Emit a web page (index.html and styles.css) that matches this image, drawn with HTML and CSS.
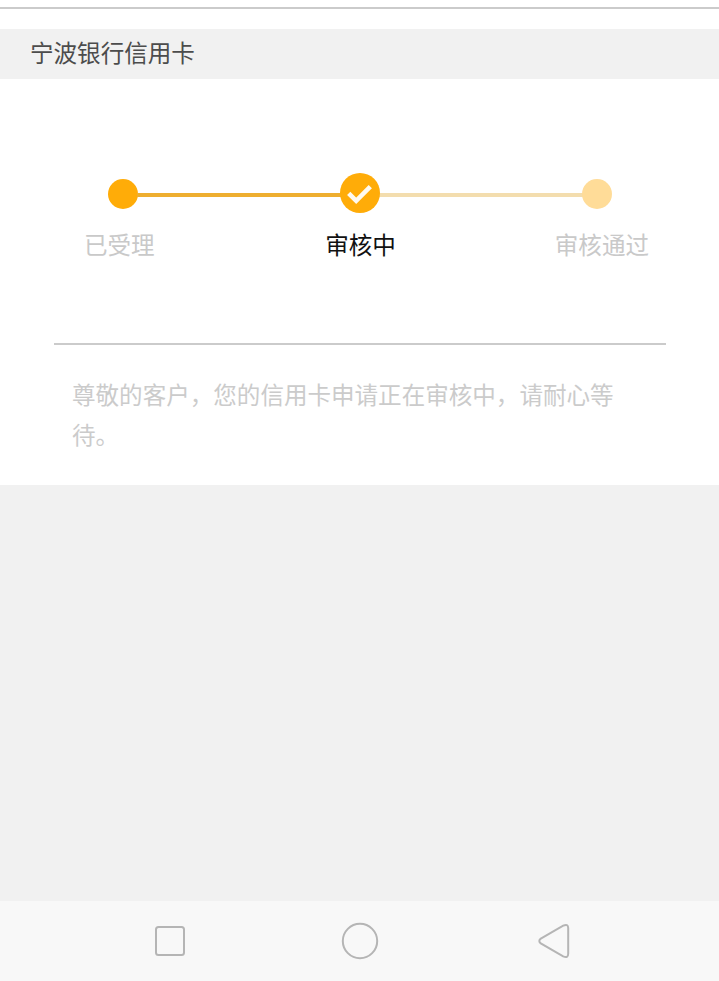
FILE: index.html
```html
<!DOCTYPE html>
<html lang="zh-CN">
  <head>
    <meta charset="UTF-8" />
    <meta name="viewport" content="width=device-width, initial-scale=1.0" />
    <title>宁波银行信用卡</title>
    <link rel="stylesheet" href="styles.css">
  </head>
  <body>
    <div class="top-line"></div>
    <h1 class="card-title">宁波银行信用卡</h1>

    <div class="panel">
      <div class="track">
        <span class="dot"></span>
        <span class="bar"></span>
        <svg class="current-dot" viewBox="0 0 40 40">
          <circle cx="20" cy="20" r="20" fill="#ffac08" />
          <path d="M8.7 20.3 L16.2 27.8 L30.3 13.7" fill="none" stroke="#fffaf0" stroke-width="4.6" />
        </svg>
        <span class="bar bar-pending"></span>
        <span class="dot dot-pending"></span>
      </div>

      <div class="labels">
        <span>已受理</span>
        <span class="active">审核中</span>
        <span>审核通过</span>
      </div>

      <p class="message">尊敬的客户，您的信用卡申请正在审核中，请耐心等待。</p>
    </div>

    <!-- System navigation -->
    <div class="nav">
      <svg viewBox="0 0 40 40">
        <rect x="6" y="7" width="28" height="28" rx="2.5" />
      </svg>
      <svg viewBox="0 0 40 40">
        <circle cx="20" cy="21" r="17.2" />
      </svg>
      <svg viewBox="0 0 40 40">
        <path d="M10.8 18.6 L33.2 5.6 Q38.2 3.4 38.2 8 V33.8 Q38.2 38.6 33.2 36.4 L10.8 23.4 Q7.8 21 10.8 18.6 Z" />
      </svg>
    </div>
  </body>
</html>
```

FILE: styles.css
```css
* {
  margin: 0;
  padding: 0;
  box-sizing: border-box;
}

body {
  display: flex;
  flex-direction: column;
  min-height: 100vh;
  background-color: #f1f1f1;
  font-family: "Noto Sans CJK SC", sans-serif;
  font-size: 23.55px;
}

.top-line {
  height: 29px;
  padding-top: 7px;
  background-color: #fff;
}

.top-line::after {
  content: "";
  display: block;
  height: 2px;
  background-color: #cbcbcb;
}

.card-title {
  height: 50px;
  padding-left: 30px;
  font-size: inherit;
  font-weight: 400;
  line-height: 46px;
  color: #4c4c4c;
}

.panel {
  height: 406px;
  padding: 94px 53px 0 54px;
  background-color: #fff;
}

.track {
  display: flex;
  align-items: center;
  height: 40px;
  margin: 0 54px;
}

.dot {
  width: 30px;
  height: 30px;
  margin-top: 2px;
  border-radius: 50%;
  background-color: #ffac08;
}

.dot-pending {
  background-color: #ffdc98;
}

.bar {
  flex: 1;
  height: 4px;
  margin: 4px -1px 0;
  background-color: #eeae30;
}

.bar-pending {
  background-color: #f3ddae;
}

.current-dot {
  position: relative;
  width: 40px;
  height: 40px;
}

.labels {
  display: grid;
  grid-template-columns: 1fr auto 1fr;
  height: 132px;
  padding: 11px 17px 0 18px;
  line-height: 40px;
  color: #c9c9c9;
  border-bottom: 2px solid #cbcbcb;
}

.labels .active {
  color: #111;
}

.labels span:first-child {
  padding-left: 12px;
}

.labels span:last-child {
  text-align: right;
}

.message {
  padding: 29px 40px 0 18px;
  line-height: 40px;
  color: #cbcbcb;
}

.nav {
  display: flex;
  justify-content: space-between;
  height: 80px;
  margin-top: auto;
  padding: 19px 149px 0 150px;
  background-color: #f8f8f8;
}

.nav svg {
  width: 40px;
  height: 40px;
  fill: none;
  stroke: #b5b5b5;
  stroke-width: 2;
}
```
